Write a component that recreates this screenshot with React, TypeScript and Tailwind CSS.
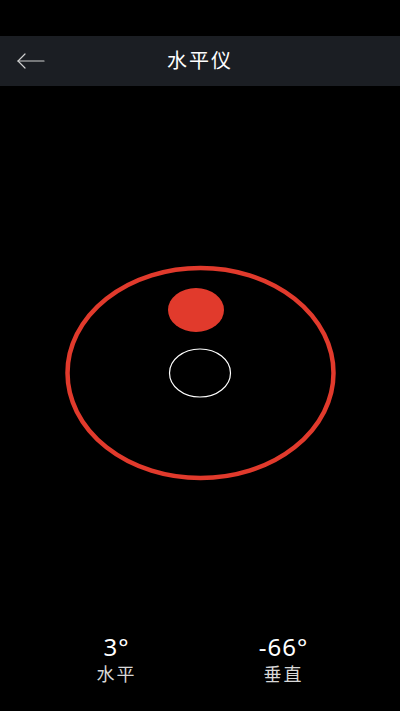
import React from "react";

const font = { fontFamily: '"Noto Sans", "Noto Sans CJK SC", sans-serif' };

// Level bubble drawing
const LevelGauge = () => (
  <svg width="400" height="222" viewBox="0 263 400 222" className="block">
    <ellipse cx="200.5" cy="373" rx="133" ry="105" fill="none" stroke="#e13a2c" strokeWidth="4.5" />
    <ellipse cx="196" cy="310" rx="28" ry="22" fill="#e13a2c" />
    <ellipse cx="200" cy="373" rx="30.5" ry="24" fill="none" stroke="#ffffff" strokeWidth="1.2" />
  </svg>
);

const Stat = ({ value, label }: { value: string; label: string }) => (
  <div className="flex flex-col items-center gap-[3px]">
    <span className="text-[24px] leading-[28px] tracking-[1px] text-white">{value}</span>
    <span className="text-[18px] leading-[21px] tracking-[2px] text-[#d8d8d8]">{label}</span>
  </div>
);

export default function App() {
  return (
    <div className="flex h-[711px] w-[400px] flex-col bg-black" style={font}>
      <div className="h-9" />
      <div className="relative flex h-[50px] items-center justify-center bg-[#1b1e23]">
        <button className="absolute left-0 top-0 flex h-[50px] w-[56px] items-center pl-[17px]">
          <svg width="30" height="16" viewBox="0 0 30 16" fill="none" stroke="#d0d0d0" strokeWidth="1.2" strokeLinecap="round">
            <path d="M1 8 H27" />
            <path d="M8 1 L1 8 L8 15" />
          </svg>
        </button>
        <span className="text-[20px] font-normal tracking-[2px] text-white">水平仪</span>
      </div>
      <div className="flex-1 pt-[177px]">
        <LevelGauge />
      </div>
      <div className="grid grid-cols-2 px-[33px] pb-[26px]">
        <Stat value="3°" label="水平" />
        <Stat value="-66°" label="垂直" />
      </div>
    </div>
  );
}
